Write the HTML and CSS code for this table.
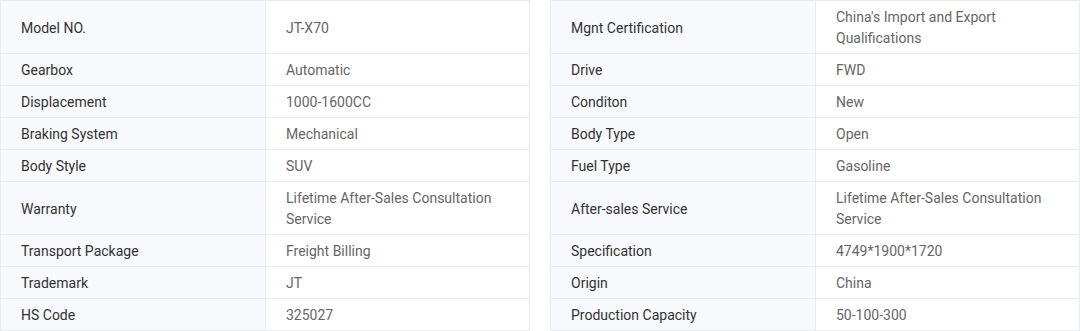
FILE: index.html
```html
<!DOCTYPE html>
<html>
<head>
<meta charset="utf-8">
<link rel="stylesheet" href="styles.css">
</head>
<body>
<div class="specs">
  <div class="table">
    <div class="label">Model NO.</div><div class="value">JT-X70</div>
    <div class="label">Gearbox</div><div class="value">Automatic</div>
    <div class="label">Displacement</div><div class="value">1000-1600CC</div>
    <div class="label">Braking System</div><div class="value">Mechanical</div>
    <div class="label">Body Style</div><div class="value">SUV</div>
    <div class="label">Warranty</div><div class="value">Lifetime After-Sales Consultation Service</div>
    <div class="label">Transport Package</div><div class="value">Freight Billing</div>
    <div class="label">Trademark</div><div class="value">JT</div>
    <div class="label">HS Code</div><div class="value">325027</div>
  </div>
  <div class="table">
    <div class="label">Mgnt Certification</div><div class="value">China's Import and Export Qualifications</div>
    <div class="label">Drive</div><div class="value">FWD</div>
    <div class="label">Conditon</div><div class="value">New</div>
    <div class="label">Body Type</div><div class="value">Open</div>
    <div class="label">Fuel Type</div><div class="value">Gasoline</div>
    <div class="label">After-sales Service</div><div class="value">Lifetime After-Sales Consultation Service</div>
    <div class="label">Specification</div><div class="value">4749*1900*1720</div>
    <div class="label">Origin</div><div class="value">China</div>
    <div class="label">Production Capacity</div><div class="value">50-100-300</div>
  </div>
</div>
</body>
</html>
```
FILE: styles.css
```css
html, body {
  margin: 0;
  padding: 0;
  background: #ffffff;
}
body {
  font-family: Roboto, "Liberation Sans", Arial, sans-serif;
  font-size: 14px;
  line-height: 21px;
}
.specs {
  display: flex;
  align-items: flex-start;
  gap: 20px;
  width: 1080px;
}
.table {
  display: grid;
  grid-template-columns: 264px 263px;
  grid-template-rows: 52px repeat(4, 31px) 52px repeat(3, 31px);
  gap: 1px;
  padding: 1px;
  background: #e8ecf2;
  width: 530px;
  box-sizing: border-box;
}
.label, .value {
  padding: 6px 20px 4px;
  display: flex;
  align-items: center;
}
.label {
  background: #f7f9fc;
  color: #333333;
}
.value {
  background: #ffffff;
  color: #666666;
}
```
